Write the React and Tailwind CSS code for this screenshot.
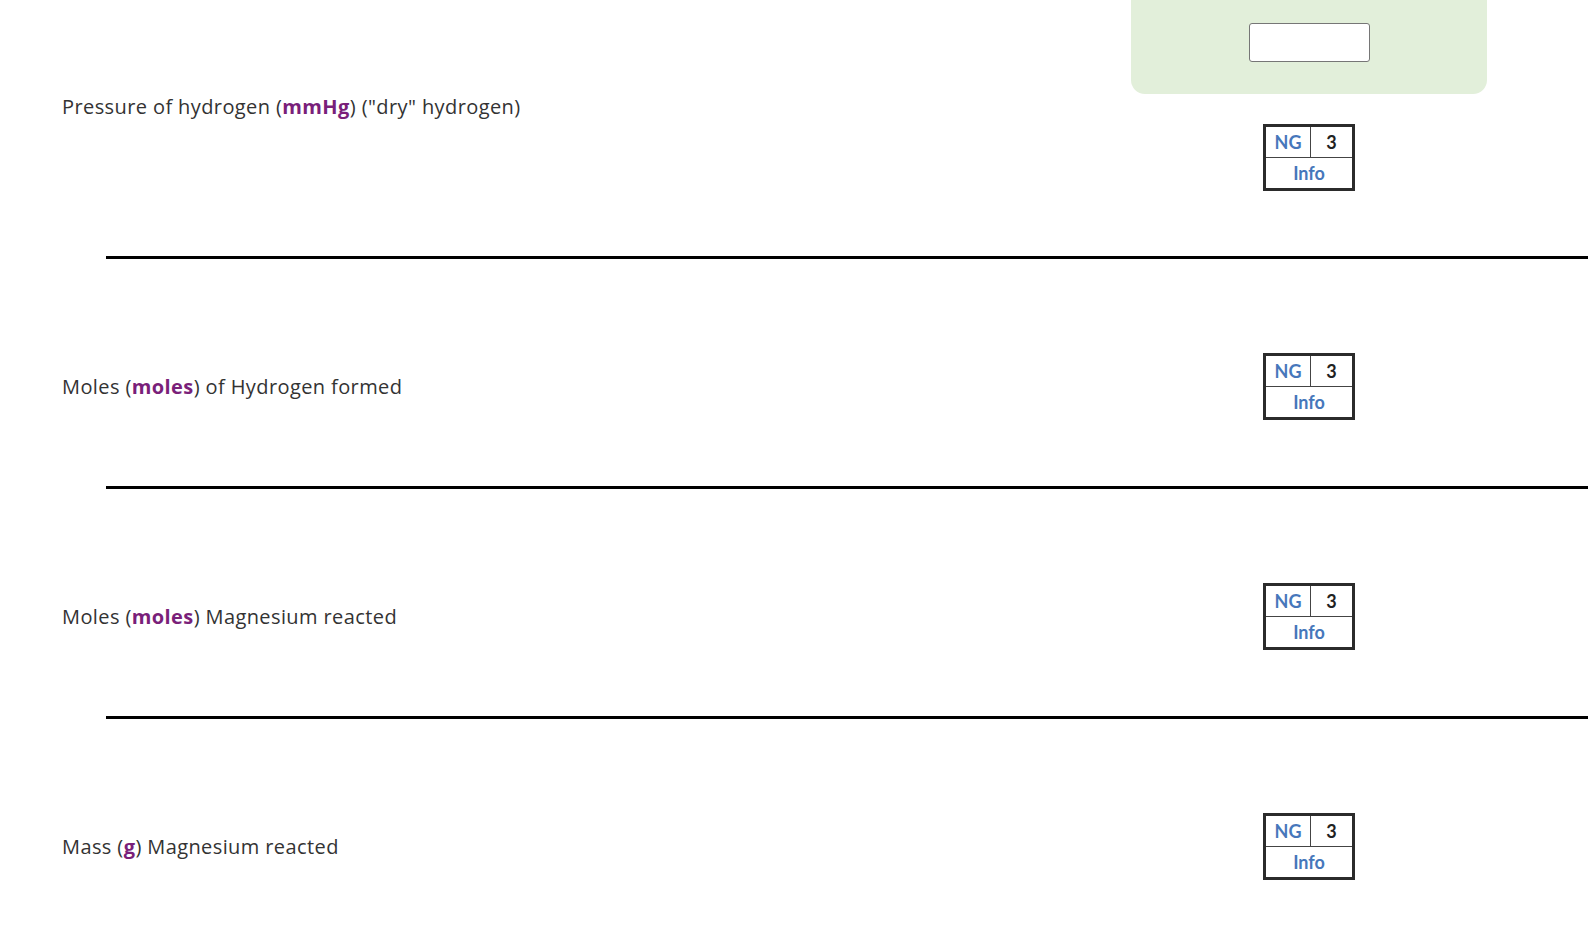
const rows = [
  { pre: 'Pressure of hydrogen (', unit: 'mmHg', post: ') ("dry" hydrogen)' },
  { pre: 'Moles (', unit: 'moles', post: ') of Hydrogen formed' },
  { pre: 'Moles (', unit: 'moles', post: ') Magnesium reacted' },
  { pre: 'Mass (', unit: 'g', post: ') Magnesium reacted' },
]

function Grade() {
  return (
    <table className="border-collapse border-[3px] border-[#2b2b2b] w-[92px] text-[18px] font-bold leading-none font-['Lato',sans-serif]">
      <tbody>
        <tr className="h-[32px]">
          <td className="border border-[#444] text-center text-[#4677bb] w-[46px]">NG</td>
          <td className="border border-[#444] text-center text-[#222]">3</td>
        </tr>
        <tr className="h-[32px]">
          <td colSpan={2} className="border border-[#444] text-center text-[#4677bb]">Info</td>
        </tr>
      </tbody>
    </table>
  )
}

function Label({ row }) {
  return (
    <div className="text-[20px] tracking-[0.4px] text-[#333] font-['Open_Sans',sans-serif]">
      {row.pre}
      <span className="font-bold text-[#7a1f7a]">{row.unit}</span>
      {row.post}
    </div>
  )
}

export default function App() {
  return (
    <div className="w-[1588px] h-[928px] overflow-hidden bg-white">
      <div className="flex">
        <div className="flex-1 pl-[62px] pt-[92px]">
          <Label row={rows[0]} />
        </div>
        <div className="w-[356px] mr-[101px] flex flex-col items-center">
          <div className="w-full h-[94px] bg-[#e2efda] rounded-b-[14px] flex justify-center pt-[23px]">
            <input className="w-[121px] h-[39px] bg-white border border-[#767676] rounded-[3px]" />
          </div>
          <div className="mt-[30px]">
            <Grade />
          </div>
        </div>
      </div>
      <div className="h-[3px] bg-black ml-[106px] mt-[65px]" />
      {rows.slice(1).map((row, i) => (
        <div key={i}>
          <div className="flex items-center pt-[94px] pb-[66px]">
            <div className="flex-1 pl-[62px]">
              <Label row={row} />
            </div>
            <div className="w-[356px] mr-[101px] flex justify-center">
              <Grade />
            </div>
          </div>
          {i < 2 && <div className="h-[3px] bg-black ml-[106px]" />}
        </div>
      ))}
    </div>
  )
}
